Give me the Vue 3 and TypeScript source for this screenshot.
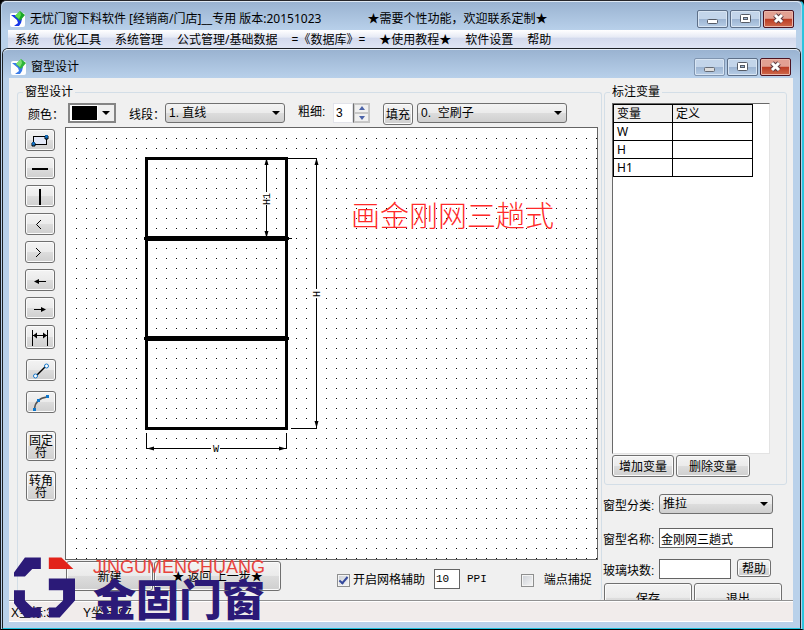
<script setup lang="ts">
import { ref } from 'vue'

interface Variable {
  name: string
  definition: string
}

const menus: string[] = [
  '系统', '优化工具', '系统管理', '公式管理/基础数据',
  '=《数据库》=', '★使用教程★', '软件设置', '帮助',
]

const tools: { id: string; title: string }[] = [
  { id: 'rect', title: '矩形' },
  { id: 'hline', title: '横线' },
  { id: 'vline', title: '竖线' },
  { id: 'lt', title: '左开' },
  { id: 'gt', title: '右开' },
  { id: 'left', title: '左推' },
  { id: 'right', title: '右推' },
  { id: 'dim', title: '标注' },
  { id: 'segment', title: '线段' },
  { id: 'arc', title: '弧线' },
]

const variables = ref<Variable[]>([
  { name: 'W', definition: '' },
  { name: 'H', definition: '' },
  { name: 'H1', definition: '' },
])

const thickness = ref('3')
const gridOn = ref(true)
const gridSize = ref('10')
const snapOn = ref(false)
const windowName = ref('金刚网三趟式')
const glassCount = ref('')

function step(delta: number): void {
  thickness.value = String(Math.max(1, Number(thickness.value) + delta))
}
function addVariable(): void {
  variables.value.push({ name: 'H' + variables.value.length, definition: '' })
}
function removeVariable(): void {
  variables.value.pop()
}
</script>

<template>
  <div class="app-window">
    <header class="titlebar main-title">
      <svg class="app-icon" viewBox="0 0 16 16" aria-hidden="true">
        <rect x="0" y="2" width="15" height="14" rx="2" fill="#fff" />
        <path d="M1 4l4 0 4 4h3l-1 4-2 3H4l4-3-1-3z" fill="#1636e8" />
        <path d="M10 0l5 4-5 6-5-5z" fill="#17a526" />
        <path d="M10 0l1 4-2 4-4-3z" fill="#5fdc50" />
      </svg>
      <h1 class="caption">无忧门窗下料软件 [经销商/门店]__专用 版本:20151023</h1>
      <span class="slogan">★需要个性功能，欢迎联系定制★</span>
      <div class="win-buttons">
        <button type="button" aria-label="最小化"><svg viewBox="0 0 29 16"><rect x="9.500" y="8.500" width="10" height="4" rx="1" fill="#fff" stroke="#555b66" /></svg></button>
        <button type="button" aria-label="最大化"><svg viewBox="0 0 29 16"><rect x="9.500" y="3.500" width="10" height="8" rx="1" fill="#fff" stroke="#555b66" /><rect x="12.500" y="6.500" width="4" height="2" fill="#9db5d2" stroke="#555b66" /></svg></button>
        <button type="button" class="close" aria-label="关闭"><svg viewBox="0 0 29 16"><path d="M11 4l7 7M18 4l-7 7" stroke="#5c3a40" stroke-width="5" /><path d="M11 4l7 7M18 4l-7 7" stroke="#fff" stroke-width="3" /></svg></button>
      </div>
    </header>

    <nav class="menubar">
      <button v-for="m in menus" :key="m" type="button">{{ m }}</button>
    </nav>

    <section class="child-window">
      <header class="titlebar child-title">
        <svg class="app-icon" viewBox="0 0 16 16" aria-hidden="true">
          <rect x="0" y="2" width="15" height="14" rx="2" fill="#fff" />
          <path d="M1 4l4 0 4 4h3l-1 4-2 3H4l4-3-1-3z" fill="#3a7be8" />
          <path d="M10 0l5 4-5 6-5-5z" fill="#2fb43a" />
          <path d="M10 0l1 4-2 4-4-3z" fill="#7be070" />
        </svg>
        <h2 class="caption">窗型设计</h2>
        <div class="win-buttons">
          <button type="button" class="dim" aria-label="最小化"><svg viewBox="0 0 29 16"><rect x="9.500" y="8.500" width="10" height="4" rx="1" fill="#ddd" stroke="#666c76" /></svg></button>
          <button type="button" aria-label="还原"><svg viewBox="0 0 29 16"><rect x="9.500" y="3.500" width="10" height="8" rx="1" fill="#fff" stroke="#555b66" /><rect x="12.500" y="6.500" width="4" height="2" fill="#9db5d2" stroke="#555b66" /></svg></button>
          <button type="button" class="close" aria-label="关闭"><svg viewBox="0 0 29 16"><path d="M11 4l7 7M18 4l-7 7" stroke="#5c3a40" stroke-width="5" /><path d="M11 4l7 7M18 4l-7 7" stroke="#fff" stroke-width="3" /></svg></button>
        </div>
      </header>

      <main class="client">
        <div class="workspace">
          <fieldset class="design">
            <legend>窗型设计</legend>

            <div class="options">
              <div class="field">
                <label for="color">颜色：</label>
                <span class="color-pick">
                  <select id="color"><option value="#000000"></option></select>
                  <i class="arrow"></i>
                </span>
              </div>
              <div class="field">
                <label for="line">线段：</label>
                <span class="combo line-combo">
                  <select id="line"><option>1. 直线</option></select>
                  <i class="arrow"></i>
                </span>
              </div>
              <div class="field thick">
                <label for="thick">粗细:</label>
                <span class="spin">
                  <input id="thick" v-model="thickness" type="text" inputmode="numeric" />
                  <span class="spin-buttons">
                    <button type="button" aria-label="增加" @click="step(1)"><svg viewBox="0 0 12 7"><path d="M6 1l3 4H3z" fill="#4a62a8" /></svg></button>
                    <button type="button" aria-label="减少" @click="step(-1)"><svg viewBox="0 0 12 7"><path d="M6 6l3-4H3z" fill="#4a62a8" /></svg></button>
                  </span>
                </span>
              </div>
              <div class="field fill">
                <button type="button" class="btn">填充</button>
                <span class="combo brush-combo">
                  <select id="brush" aria-label="填充"><option>0.&nbsp; 空刷子</option></select>
                  <i class="arrow"></i>
                </span>
              </div>
            </div>

            <div class="board">
              <div class="tools">
                <button v-for="t in tools" :key="t.id" type="button" class="btn tool" :class="'tool-' + t.id" :aria-label="t.title">
                  <svg viewBox="0 0 24 16" fill="none" stroke="#000">
                    <template v-if="t.id === 'rect'">
                      <rect x="5.500" y="3.500" width="13" height="8" fill="#e3e9f8" />
                      <path d="M4 10h3v3H4zM17 3h3v3h-3z" fill="#1d86dd" />
                      <path d="M4.500 9.500h2v2h-2zM17.500 2.500h2v2h-2z" fill="#1d86dd" stroke="#0a5ea8" />
                    </template>
                    <path v-else-if="t.id === 'hline'" d="M4 8h16" stroke-width="2" />
                    <path v-else-if="t.id === 'vline'" d="M12 0v16" stroke-width="2" />
                    <path v-else-if="t.id === 'lt'" d="M13 3l-4.500 4.500L13 12" />
                    <path v-else-if="t.id === 'gt'" d="M8 3l4.500 4.500L8 12" />
                    <g v-else-if="t.id === 'left'"><path d="M7 8.500h11" /><path d="M6 8.500l5-2.500v5z" fill="#000" stroke="none" /></g>
                    <g v-else-if="t.id === 'right'"><path d="M6 8.500h11" /><path d="M18 8.500l-5-2.500v5z" fill="#000" stroke="none" /></g>
                    <g v-else-if="t.id === 'dim'"><path d="M4.500 0v16M19.500 0v16M5 5.500h14" /><path d="M5 5.500l4-3v6zM19 5.500l-4-3v6z" fill="#000" stroke="none" /></g>
                    <g v-else-if="t.id === 'segment'"><path d="M7 13L17 3" stroke-width="1.500" /><circle cx="6.500" cy="13" r="2" fill="#fff" stroke="#1677c8" /><circle cx="17.500" cy="3" r="2" fill="#fff" stroke="#1677c8" /></g>
                    <g v-else><path d="M5.500 14C6 8 10 3 18 2" stroke="#555" stroke-width="1.500" /><path d="M4 13h3v3H4zM8 4h3v3H8zM17 0h3v3h-3z" fill="#0d76cc" stroke="none" /></g>
                  </svg>
                </button>
                <button type="button" class="btn mark">固定符</button>
                <button type="button" class="btn mark">转角符</button>
              </div>

              <div class="canvas">
                <svg class="drawing" role="img" aria-label="窗型图">
                  <defs>
                    <pattern id="dots" x="10" y="10" width="10" height="10" patternUnits="userSpaceOnUse">
                      <rect width="1" height="1" fill="#000" />
                    </pattern>
                  </defs>
                  <rect x="5" y="5" width="100%" height="100%" fill="url(#dots)" />
                  <g fill="none" stroke="#000">
                    <rect x="80.500" y="30.500" width="140" height="270" stroke-width="3" />
                    <path d="M79 110.500H222M79 210.500H222" stroke-width="5" />
                    <path d="M78 110.500h1M78 210.500h1M222 110.500h1M222 210.500h1" stroke-width="3" />
                    <path d="M220 30.500H250.500V161M250.500 170V300.500H225M223 110.500H226" />
                    <path d="M80.500 305V320.500H145M154 320.500H220.500V305" />
                    <path d="M200.500 32V64M200.500 77V108" />
                  </g>
                  <path d="M200.500 30l2 7h-4zM200.500 110l2-7h-4zM250.500 30l2 7h-4zM250.500 300l2-7h-4zM81 320.500l7-2v4zM220 320.500l-7-2v4z" />
                  <g class="dim-text">
                    <text transform="translate(204 71) rotate(-90)">H1</text>
                    <text transform="translate(254 166) rotate(-90)">H</text>
                    <text x="150" y="324">W</text>
                  </g>
                  <text class="note" x="285" y="99">画金刚网三趟式</text>
                </svg>
              </div>
            </div>

            <div class="actions">
              <button type="button" class="btn new-btn">新建</button>
              <button type="button" class="btn back-btn">★ 返回 上一步★</button>
              <label class="check grid-check"><input v-model="gridOn" type="checkbox" />开启网格辅助</label>
              <label class="ppi"><input v-model="gridSize" type="text" /><span>PPI</span></label>
              <label class="check snap-check"><input v-model="snapOn" type="checkbox" />端点捕捉</label>
            </div>
          </fieldset>

          <aside class="side">
            <fieldset class="vars">
              <legend>标注变量</legend>
              <div class="list">
                <table>
                  <thead><tr><th>变量</th><th>定义</th></tr></thead>
                  <tbody>
                    <tr v-for="v in variables" :key="v.name"><td>{{ v.name }}</td><td>{{ v.definition }}</td></tr>
                  </tbody>
                </table>
              </div>
              <div class="var-buttons">
                <button type="button" class="btn" @click="addVariable">增加变量</button>
                <button type="button" class="btn wide" @click="removeVariable">删除变量</button>
              </div>
            </fieldset>

            <form class="props" @submit.prevent>
              <div class="prop">
                <label for="kind">窗型分类:</label>
                <span class="combo">
                  <select id="kind"><option>推拉</option></select>
                  <i class="arrow"></i>
                </span>
              </div>
              <div class="prop">
                <label for="name">窗型名称:</label>
                <input id="name" v-model="windowName" type="text" />
              </div>
              <div class="prop">
                <label for="glass">玻璃块数:</label>
                <input id="glass" v-model="glassCount" type="text" />
                <button type="button" class="btn help">帮助</button>
              </div>
              <div class="submit">
                <button type="submit" class="btn">保存</button>
                <button type="button" class="btn">退出</button>
              </div>
            </form>
          </aside>
        </div>

        <footer class="status">
          <span>X坐标:3</span>
          <span>Y坐标:97</span>
        </footer>
      </main>
    </section>

    <div class="watermark">
      <svg viewBox="42 52 184 181" aria-hidden="true">
        <path fill="#2b1a78" d="M75 52h48v35H97l-22 22H42V97zM42 151h33v31l22 21h26v30H75l-33-43zM147 115h79v67l-46 51h-33v-30h21l22-21v-31h-43z" />
        <path fill="#e2231a" d="M147 52h38l36 35h-74z" />
      </svg>
      <div class="brand">
        <span class="brand-en">JINGUMENCHUANG</span>
        <span class="brand-cn">金固门窗</span>
      </div>
    </div>
  </div>
</template>

<style>
body {
  margin: 0;
  background: #000;
}
</style>

<style scoped>
* {
  box-sizing: border-box;
}

.app-window {
  position: relative;
  display: flex;
  flex-direction: column;
  height: 100vh;
  overflow: hidden;
  padding: 0 1px;
  border-top: 1px solid #26262a;
  border-right: 2px solid #2cc3dd;
  border-left: 1px solid #15181c;
  border-bottom: 1px solid #000;
  border-radius: 6px 6px 0 0;
  background: #b9d1ea;
  color: #000;
  font-family: "Liberation Sans", "Noto Sans CJK SC", sans-serif;
  font-size: 12px;
  line-height: 16px;
}

button,
input,
select {
  margin: 0;
  font: inherit;
  color: inherit;
}

/* title bars */
.titlebar {
  display: flex;
  align-items: center;
  flex: none;
  background: linear-gradient(#9ab3d1, #b8d0ea);
}
.main-title {
  height: 29px;
  padding: 6px 7px 0 8px;
  border-top: 1px solid #dfe9f4;
  border-radius: 5px 5px 0 0;
}
.child-title {
  height: 29px;
  padding: 5px 9px 0 8px;
  border-top: 1px solid #e8f0f8;
  border-radius: 5px 5px 0 0;
}
.app-icon {
  width: 16px;
  height: 16px;
  margin-right: 4px;
}
.caption,
.slogan {
  margin: 0;
  font-family: "Noto Sans", "Noto Sans CJK SC", sans-serif;
  font-size: 12px;
  font-weight: 400;
  white-space: pre;
}
.slogan {
  margin-left: 46px;
}
.win-buttons {
  display: flex;
  gap: 2px;
  margin-left: auto;
}
.win-buttons button {
  width: 31px;
  height: 18px;
  padding: 0;
  border: 1px solid #5d6f88;
  border-radius: 2px;
  background: linear-gradient(#c3d5ea 48%, #9cb4d2 50%, #b7cde6);
  box-shadow: inset 0 0 0 1px #d8e5f3;
}
.win-buttons svg {
  display: block;
  width: 29px;
  height: 16px;
}
.win-buttons .dim {
  border-color: #8095b0;
}
.win-buttons .close {
  border-color: #4d1422;
  background: linear-gradient(#e2a092 46%, #bb3a22 50%, #cf6a4c);
  box-shadow: inset 0 0 0 1px #eab6aa;
}

.menubar {
  display: flex;
  flex: none;
  height: 18px;
  margin: 0 5px 0 6px;
  background: linear-gradient(#fff, #e6eaf5 40%, #d3daed 45%, #dfe5f4);
}
.menubar button {
  padding: 2px 7px 0;
  border: 0;
  background: none;
  line-height: 16px;
  font-family: "Noto Sans", "Noto Sans CJK SC", sans-serif;
  white-space: nowrap;
}

.child-window {
  display: flex;
  flex: 1;
  flex-direction: column;
  min-height: 0;
  border: 1px solid #1d2126;
  border-bottom: 1px solid #1cc0dc;
  border-radius: 6px 6px 0 0;
  background: #b9d1ea;
}
.client {
  display: flex;
  flex: 1;
  flex-direction: column;
  min-height: 0;
  margin: 0 7px 6px 6px;
  background: #f0f0f0;
}
.workspace {
  display: flex;
  flex: 1;
  gap: 1px;
  min-height: 0;
  overflow: hidden;
  padding: 5px 6px 0 8px;
}

/* group boxes */
fieldset {
  min-width: 0;
  margin: 0;
  padding: 0;
  border: 1px solid #d3dee7;
  border-radius: 3px;
}
legend {
  margin-left: 5px;
  padding: 0 2px;
  line-height: 18px;
}
.design {
  display: flex;
  flex: 1;
  flex-direction: column;
  border-bottom: 0;
}

/* shared controls */
.btn {
  padding: 2px 0 0;
  border: 1px solid #707070;
  border-radius: 3px;
  background: linear-gradient(#f3f3f3, #ebebeb 48%, #dddddd 50%, #cfcfcf);
  box-shadow: inset 0 0 0 1px #fbfbfb;
  white-space: nowrap;
}
.combo,
.color-pick {
  display: grid;
}
.combo select,
.color-pick select {
  grid-area: 1 / 1;
  width: 100%;
  height: 20px;
  padding: 0 3px;
  appearance: none;
  border: 1px solid #707070;
  border-radius: 3px;
  background: linear-gradient(#f3f3f3, #ebebeb 48%, #dddddd 50%, #cfcfcf);
}
.arrow {
  grid-area: 1 / 1;
  align-self: center;
  justify-self: end;
  margin-right: 5px;
  border: 4px solid transparent;
  border-top-color: #000;
  border-bottom: 0;
  pointer-events: none;
}
.color-pick select {
  border: 2px solid #858585;
  border-radius: 0;
  background:
    linear-gradient(#000, #000) 2px 1px / 25px 14px no-repeat,
    linear-gradient(#fff, #fff) 0 0 / 28px 16px no-repeat,
    #f0f0f0;
}
.color-pick .arrow {
  margin-right: 6px;
}

.options {
  display: flex;
  flex: none;
  height: 24px;
  margin-top: 2px;
  padding-left: 10px;
}
.field {
  display: flex;
  align-items: flex-start;
  margin-right: 13px;
}
.field label {
  width: 36px;
  line-height: 24px;
  white-space: nowrap;
}
.color-pick {
  width: 48px;
  margin-left: 4px;
}
.line-combo {
  width: 120px;
}
.field.thick label {
  width: 35px;
  line-height: 18px;
}
.spin {
  display: flex;
}
.spin input {
  width: 20px;
  height: 20px;
  padding: 0 2px;
  border: 1px solid #e2e3ea;
  background: #fff;
}
.spin-buttons {
  display: grid;
  width: 17px;
  height: 20px;
  border: 1px solid #c4c4c4;
  border-left-color: #707070;
  background: #fff;
}
.spin-buttons button {
  display: grid;
  place-items: center;
  padding: 0;
  border: 1px solid #c8c8c8;
  background: #f0f0f0;
}
.spin-buttons svg {
  width: 12px;
  height: 7px;
}
.fill {
  gap: 4px;
}
.fill .btn {
  width: 30px;
  height: 22px;
}
.brush-combo {
  width: 150px;
}

.board {
  display: flex;
  flex: 1;
  min-height: 0;
  padding-right: 3px;
}
.tools {
  display: flex;
  flex: none;
  flex-direction: column;
  gap: 6px;
  width: 47px;
  padding: 2px 0 0 7px;
}
.tool {
  display: grid;
  flex: none;
  place-items: center;
  width: 30px;
  height: 22px;
}
.tool svg {
  width: 24px;
  height: 16px;
}
.tool-dim {
  height: 24px;
}
.tool-segment,
.tool-arc {
  margin: 4px 0 0 1px;
}
.mark {
  flex: none;
  width: 30px;
  height: 30px;
  margin: 12px 0 0 1px;
  line-height: 12px;
  white-space: normal;
}
.mark + .mark {
  margin-top: 4px;
}
.canvas {
  display: flex;
  flex: 1;
  min-width: 0;
  border: 1px solid #646464;
  background: #fff;
}
.drawing {
  flex: 1;
  width: 100%;
  min-width: 0;
}
.dim-text text {
  font-family: "Liberation Mono", monospace;
  font-size: 10px;
  text-anchor: middle;
}
.note {
  fill: #ff2a2a;
  font-family: "Noto Sans CJK SC", sans-serif;
  font-size: 29px;
  font-weight: 300;
}

.actions {
  display: flex;
  flex: none;
  align-items: flex-start;
  height: 40px;
  padding: 1px 0 0 48px;
}
.actions .btn {
  height: 30px;
}
.new-btn {
  width: 87px;
}
.back-btn {
  width: 127px;
  margin-left: 1px;
}
.check {
  display: flex;
  align-items: center;
  height: 38px;
  white-space: nowrap;
}
.check input {
  display: grid;
  place-items: center;
  width: 13px;
  height: 13px;
  appearance: none;
  border: 1px solid #8e8f8f;
  background: linear-gradient(135deg, #cbcfd5, #f6f6f6);
  box-shadow: inset 0 0 0 1px #f4f4f4;
}
.check input:checked::after {
  content: "";
  width: 3px;
  height: 7px;
  margin-bottom: 2px;
  border: solid #34499c;
  border-width: 0 2px 2px 0;
  transform: rotate(40deg);
}
.grid-check {
  gap: 3px;
  margin-left: 56px;
}
.ppi {
  display: flex;
  align-items: center;
  gap: 7px;
  height: 36px;
  margin-left: 9px;
  font-family: "Liberation Mono", monospace;
  font-size: 11px;
}
.ppi input {
  width: 26px;
  height: 20px;
  padding: 0 1px;
  border: 1px solid #646464;
  background: #fff;
}
.snap-check {
  gap: 10px;
  margin-left: 34px;
}

/* right column */
.side {
  flex: none;
  width: 184px;
}
.vars {
  height: 402px;
  margin: 0 0 0 1px;
}
.list {
  width: 158px;
  height: 351px;
  margin: 2px 0 0 7px;
  border: 1px solid #e3e3e3;
  border-top-color: #696969;
  border-left-color: #696969;
  background: #fff;
}
table {
  width: 140px;
  table-layout: fixed;
  border-collapse: collapse;
  font-family: "Noto Sans", "Noto Sans CJK SC", sans-serif;
}
th,
td {
  height: 18px;
  padding: 0 3px;
  border: 1px solid #000;
  font-weight: 400;
  line-height: 17px;
  text-align: left;
}
th {
  background: #f0f0f0;
}
th:first-child {
  width: 59px;
}
.var-buttons {
  display: flex;
  gap: 2px;
  margin: 1px 0 0 7px;
}
.var-buttons .btn {
  width: 62px;
  height: 22px;
}
.var-buttons .wide {
  width: 74px;
}

.props {
  padding-top: 9px;
}
.prop {
  display: flex;
  align-items: flex-start;
  height: 34px;
}
.prop + .prop + .prop {
  height: 24px;
  margin-top: -3px;
}
.prop label {
  width: 56px;
  line-height: 24px;
  white-space: nowrap;
}
.prop .combo,
.prop input {
  width: 114px;
  height: 20px;
}
.prop input {
  padding: 0 1px;
  border: 1px solid #646464;
  background: #fff;
}
.prop #glass {
  width: 72px;
}
.help {
  width: 34px;
  height: 18px;
  margin-left: 6px;
  line-height: 14px;
}
.submit {
  display: flex;
  gap: 2px;
  padding-left: 1px;
}
.submit .btn {
  width: 88px;
  height: 30px;
}

.status {
  display: flex;
  flex: none;
  gap: 24px;
  height: 22px;
  padding: 0 2px;
  border-top: 1px solid #919191;
  border-bottom: 1px solid #fff;
  background: #f1eceb;
  box-shadow: inset 0 1px 0 #fff;
  line-height: 24px;
}
.status span {
  min-width: 48px;
}

/* brand mark laid over the lower left corner */
.watermark {
  position: absolute;
  bottom: 11px;
  left: 13px;
  display: flex;
  align-items: flex-end;
  gap: 18px;
  pointer-events: none;
}
.watermark svg {
  width: 61px;
  height: 61px;
}
.brand {
  display: flex;
  flex-direction: column;
}
.brand-en {
  color: #e8443c;
  font-size: 18px;
  line-height: 18px;
}
.brand-cn {
  color: #2b1a78;
  font-family: "Noto Sans CJK SC", sans-serif;
  font-size: 43px;
  font-weight: 900;
  line-height: 42px;
}
</style>
